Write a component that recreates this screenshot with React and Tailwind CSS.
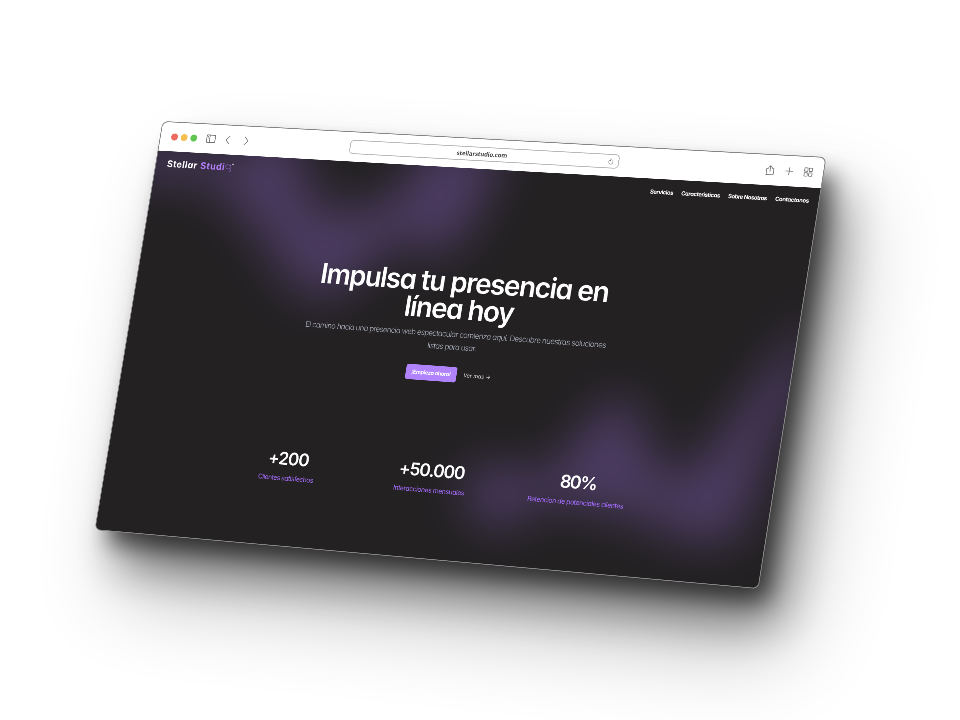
const stats = [
  { value: "+200", label: "Clientes satisfechos", tracking: "tracking-[-1.8px]", labelClass: "tracking-[-0.75px]" },
  { value: "+50.000", label: "Interacciones mensuales", tracking: "tracking-[-2.2px]", labelClass: "tracking-[-0.7px]" },
  { value: "80%", label: "Retencion de potenciales clientes", tracking: "tracking-[-3.2px]", labelClass: "tracking-[-0.75px]" },
];

function Icon({ children, className }) {
  return (
    <svg viewBox="0 0 24 24" fill="none" stroke="currentColor" strokeWidth="1.8" className={className}>
      {children}
    </svg>
  );
}

function Toolbar() {
  return (
    <div className="grid h-[66px] grid-cols-[1fr_614px_1fr] items-center bg-white text-[#737373]">
      <div className="flex items-center pl-[25px]">
        <div className="flex gap-[7px]">
          <span className="size-4 rounded-full bg-[#ec6a5e]" />
          <span className="size-4 rounded-full bg-[#f4bf4f]" />
          <span className="size-4 rounded-full bg-[#61c554]" />
        </div>
        <Icon className="ml-[21px] size-6">
          <rect x="2" y="3" width="20" height="17" rx="1.5" />
          <path d="M9 3v17M4.5 7h2M4.5 10h2" />
        </Icon>
        <Icon className="ml-[17px] size-6"><path d="M15 3l-8 9 8 9" /></Icon>
        <Icon className="ml-[19px] size-6"><path d="M8 3l8 9-8 9" /></Icon>
      </div>
      <div className="grid h-[32px] grid-cols-[1fr_auto_1fr] items-center rounded-[9px] border-2 border-[#b8b8b8] pr-[9px]">
        <span />
        <span className="translate-x-0.5 font-['Open_Sans',sans-serif] text-[13.5px] font-bold tracking-[-0.2px] text-[#4a4a4a]">stellarstudio.com</span>
        <Icon className="size-[15px] justify-self-end">
          <path d="M17 8.500a7.500 7.500 0 1 1-7-1.500M9 2l4 4-4 4" />
        </Icon>
      </div>
      <div className="flex items-center justify-end gap-[19px] pr-[21px]">
        <Icon className="size-[23px]">
          <path d="M8 8H4v14h16V8h-4M12 15V1.500M7.500 6L12 1.500 16.500 6" />
        </Icon>
        <Icon className="size-[22px]"><path d="M12 3v18M3 12h18" /></Icon>
        <Icon className="size-[22px]">
          <rect x="3" y="2" width="7.500" height="8" rx="1" />
          <rect x="14" y="2" width="7.500" height="8" rx="1" />
          <rect x="3" y="13.500" width="7.500" height="8" rx="1" />
          <rect x="14" y="13.500" width="7.500" height="8" rx="1" />
        </Icon>
      </div>
    </div>
  );
}

function Header() {
  return (
    <header className="flex h-[60px] items-center justify-between pl-[26px] pr-[21px] text-white">
      <div className="flex items-center text-[21px] font-bold">
        <span className="tracking-[0.8px]">Stellar</span>
        <span className="ml-[7px] tracking-[1px] text-[#b07cf8]">Studi</span>
        <svg viewBox="0 0 24 24" fill="none" stroke="#8b62c4" strokeWidth="1.500" className="-ml-px size-[22px]">
          <path d="M4 6c-3 4 1 9 5 9 3 0 6-2 6-5M4 6l3-2 7 2 1 9 2 5-4 1M14 7l2-2" />
          <path d="M18 3h5" stroke="#bbb" strokeWidth="2.500" />
        </svg>
      </div>
      <nav className="flex gap-[18px] text-[12.5px] font-bold">
        <span className="tracking-[-0.7px]">Servicios</span>
        <span className="tracking-[-0.65px]">Caracteristicas</span>
        <span className="tracking-[-0.75px]">Sobre Nosotros</span>
        <span className="tracking-[-0.55px]">Contactanos</span>
      </nav>
    </header>
  );
}

function Glow() {
  return (
    <div className="absolute inset-0 -z-10 opacity-30">
      <div className="absolute -inset-20 blur-[54px]">
        <div className="h-full bg-[#aa7af6] [clip-path:polygon(20px_50px,180px_60px,270px_100px,300px_20px,400px_20px,428px_110px,477px_188px,530px_198px,660px_153px,700px_20px,885px_20px,868px_100px,820px_240px,765px_285px,670px_237px,605px_325px,550px_390px,460px_375px,335px_240px,220px_142px,20px_140px)]" />
      </div>
      <div className="absolute -inset-x-20 inset-y-0 blur-[52px]">
        <div className="h-full bg-[#aa7af6] [clip-path:polygon(890px_675px,984px_650px,1090px_665px,1149px_575px,1190px_490px,1255px_490px,1312px_600px,1384px_656px,1443px_573px,1524px_427px,1620px_265px,1620px_420px,1566px_549px,1550px_659px,1525px_775px,1420px_778px,1323px_743px,1199px_725px,1067px_720px,1039px_785px,961px_780px)]" />
      </div>
    </div>
  );
}

export default function App() {
  return (
    <main className="h-[720px] w-[960px] overflow-hidden bg-white font-[Inter,sans-serif] [font-feature-settings:'cv11'] [text-rendering:geometricPrecision]">
      <div className="h-[937px] w-[1512px] origin-top-left rounded-[14px] shadow-[28px_32px_50px_-8px_rgba(0,0,0,0.6),56px_75px_100px_-4px_rgba(0,0,0,0.42),75px_120px_190px_rgba(0,0,0,0.3)] [transform:matrix3d(0.410435,0.0183578,0,-0.0000347262,-0.0731174,0.433458,0,-0.0000057385,0,0,1,0,162.5,121,0,1)]">
        <div className="h-full overflow-hidden rounded-[14px] border-2 border-[#858585] bg-[#232122]">
          <Toolbar />
          <div className="relative isolate h-[867px] overflow-hidden">
            <Glow />
            <Header />
            <section className="flex flex-col items-center pt-[164px] text-center">
              <h1 className="pl-1 text-[62px] font-semibold leading-[60px] tracking-[-2.7px] text-white">
                Impulsa tu presencia en
                <br />
                línea hoy
              </h1>
              <p className="mt-[13px] text-[17px] font-light leading-[28px] tracking-[-0.85px] text-[#aeb4c0]">
                El camino hacia una presencia web espectacular comienza aquí. Descubre nuestras soluciones
                <br />
                listas para usar.
              </p>
              <div className="mt-[29px] flex items-center gap-[16px] pl-[3px] text-[12px]">
                <span className="flex h-[34px] w-[116px] items-center justify-center rounded-[5px] bg-[#b083fc] font-bold tracking-[-0.4px] text-white">¡Empieza ahora!</span>
                <span className="text-[#d1d5db]">Ver mas →</span>
              </div>
            </section>
            <dl className="mx-auto mt-[176px] grid w-[990px] grid-cols-3 text-center">
              {stats.map((s) => (
                <div key={s.value} className="flex flex-col">
                  <dd className={"text-[39px] font-semibold leading-[44px] text-white " + s.tracking}>{s.value}</dd>
                  <dt className={"mt-[9px] text-[15px] leading-6 text-[#a66cff] " + s.labelClass}>{s.label}</dt>
                </div>
              ))}
            </dl>
          </div>
        </div>
      </div>
    </main>
  );
}
